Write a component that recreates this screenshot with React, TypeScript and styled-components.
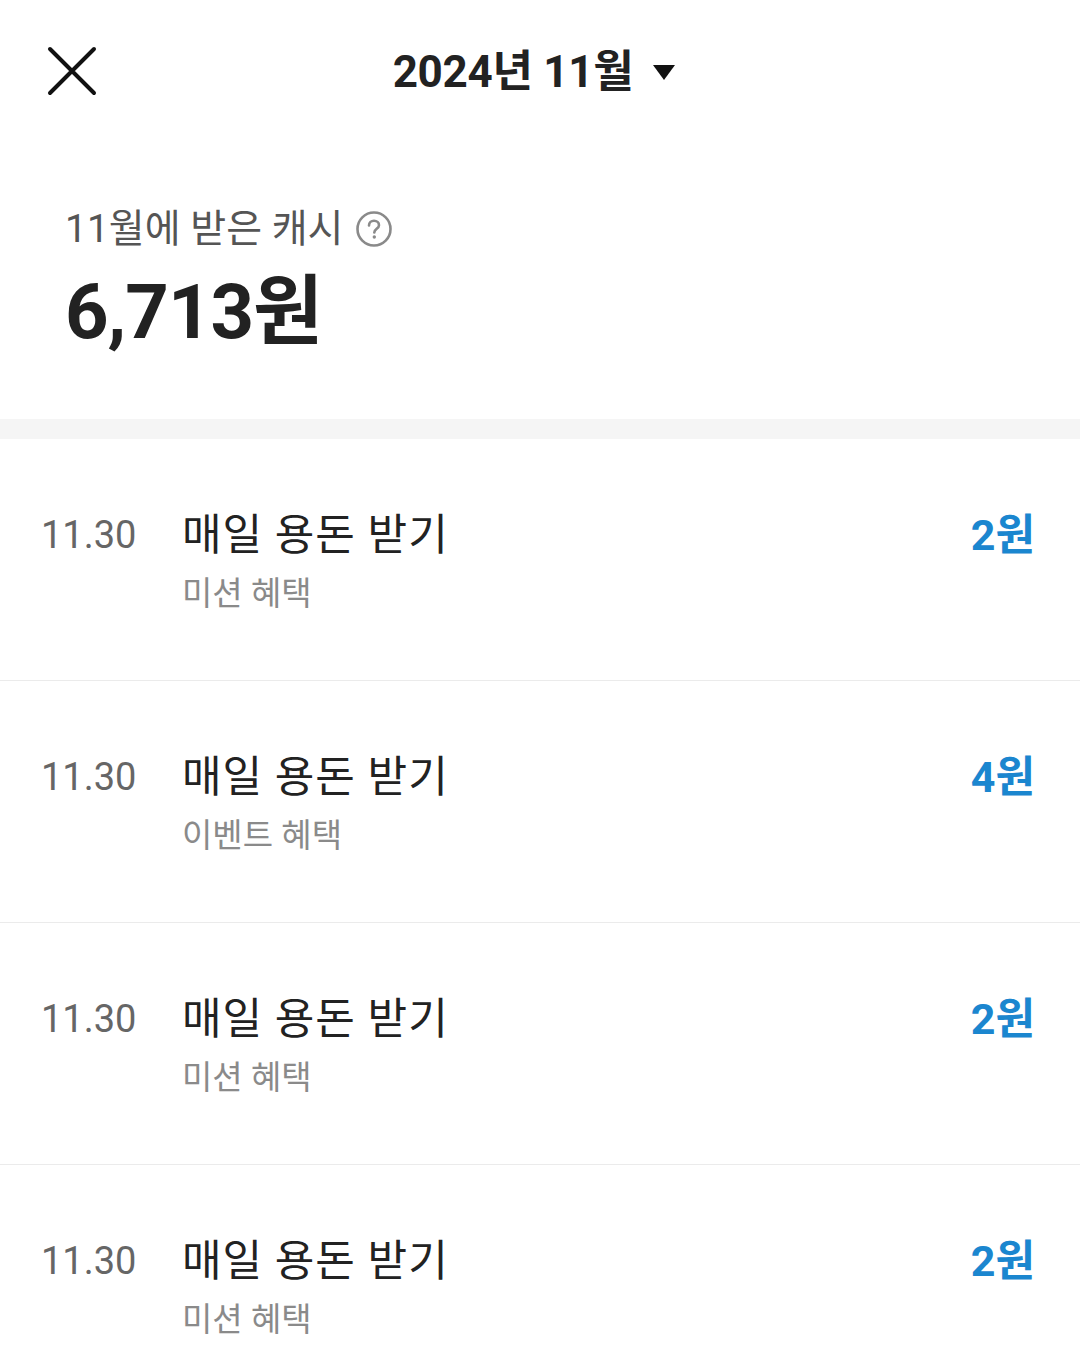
import React from 'react';
import styled, { createGlobalStyle } from 'styled-components';

const items = [
  { date: '11.30', title: '매일 용돈 받기', kind: '미션 혜택', amount: 2 },
  { date: '11.30', title: '매일 용돈 받기', kind: '이벤트 혜택', amount: 4 },
  { date: '11.30', title: '매일 용돈 받기', kind: '미션 혜택', amount: 2 },
  { date: '11.30', title: '매일 용돈 받기', kind: '미션 혜택', amount: 2 },
];

const GlobalStyle = createGlobalStyle`
  body {
    margin: 0;
    background: #fff;
    font-family: Roboto, "Noto Sans CJK KR", sans-serif;
    color: #222;
  }
`;

const CloseIcon = () => (
  <svg width="52" height="52" viewBox="0 0 52 52">
    <path d="M4 4 L48 48 M48 4 L4 48" stroke="#111" strokeWidth="4" strokeLinecap="round" fill="none" />
  </svg>
);

const HelpIcon = () => (
  <svg width="38" height="38" viewBox="0 0 38 38">
    <circle cx="19" cy="19" r="16.5" stroke="#8a8a8a" strokeWidth="2.6" fill="none" />
    <path d="M14 15.5 C14 12.5 16.3 10.8 19 10.8 C21.8 10.8 24 12.6 24 15.2 C24 18.6 19.3 18.9 19.3 22.4"
      stroke="#8a8a8a" strokeWidth="2.6" fill="none" strokeLinecap="round" />
    <circle cx="19.3" cy="27" r="1.7" fill="#8a8a8a" />
  </svg>
);

const CashHistory: React.FC = () => (
  <Page>
    <GlobalStyle />
    <Header>
      <CloseButton><CloseIcon /></CloseButton>
      <MonthPicker>
        2024년 11월
        <Caret />
      </MonthPicker>
      <span />
    </Header>

    <Summary>
      <SummaryLabel>
        11월에 받은 캐시 <HelpIcon />
      </SummaryLabel>
      <Total>6,713원</Total>
    </Summary>

    <Band />

    <List>
      {items.map((item, i) => (
        <Row key={i}>
          <DateText>{item.date}</DateText>
          <Info>
            <Title>{item.title}</Title>
            <Kind>{item.kind}</Kind>
          </Info>
          <Amount>{item.amount}원</Amount>
        </Row>
      ))}
    </List>
  </Page>
);

const Page = styled.div`
  width: 1080px;
  height: 1367px;
  overflow: hidden;
  background: #fff;
`;

const Header = styled.div`
  display: grid;
  grid-template-columns: 1fr auto 1fr;
  align-items: center;
  height: 144px;
`;

const CloseButton = styled.div`
  display: flex;
  align-items: center;
  padding-left: 46px;
  padding-bottom: 2px;
`;

const MonthPicker = styled.div`
  display: flex;
  align-items: center;
  gap: 20px;
  font-size: 44px;
  font-weight: 700;
  letter-spacing: -0.3px;
  color: #222;
  line-height: 1;
  transform: translateX(-6px);
`;

const Caret = styled.span`
  width: 0;
  height: 0;
  border-left: 11px solid transparent;
  border-right: 11px solid transparent;
  border-top: 15px solid #111;
`;

const Summary = styled.div`
  padding: 60px 65px 0;
  height: 275px;
  box-sizing: border-box;
`;

const SummaryLabel = styled.div`
  display: flex;
  align-items: center;
  gap: 12px;
  font-size: 39px;
  line-height: 50px;
  color: #555;
`;

const Total = styled.div`
  margin-top: 20px;
  font-size: 76px;
  font-weight: 700;
  line-height: 1;
  color: #222;
  letter-spacing: -1px;
`;

const Band = styled.div`
  height: 20px;
  background: #f5f5f5;
`;

const List = styled.div``;

const Row = styled.div`
  display: grid;
  grid-template-columns: 141px 1fr auto;
  align-items: start;
  height: 242px;
  box-sizing: border-box;
  padding: 70px 45px 0 41px;
  border-bottom: 1px solid #ebebeb;
`;

const DateText = styled.div`
  font-size: 38px;
  line-height: 50px;
  color: #666;
  padding-top: 1px;
`;

const Info = styled.div`
  display: flex;
  flex-direction: column;
`;

const Title = styled.div`
  font-size: 43px;
  line-height: 52px;
  color: #222;
  letter-spacing: 1px;
`;

const Kind = styled.div`
  margin-top: 11px;
  font-size: 33px;
  line-height: 44px;
  color: #8a8a8a;
`;

const Amount = styled.div`
  font-size: 43px;
  line-height: 52px;
  font-weight: 700;
  color: #1b86cf;
`;

export default CashHistory;
